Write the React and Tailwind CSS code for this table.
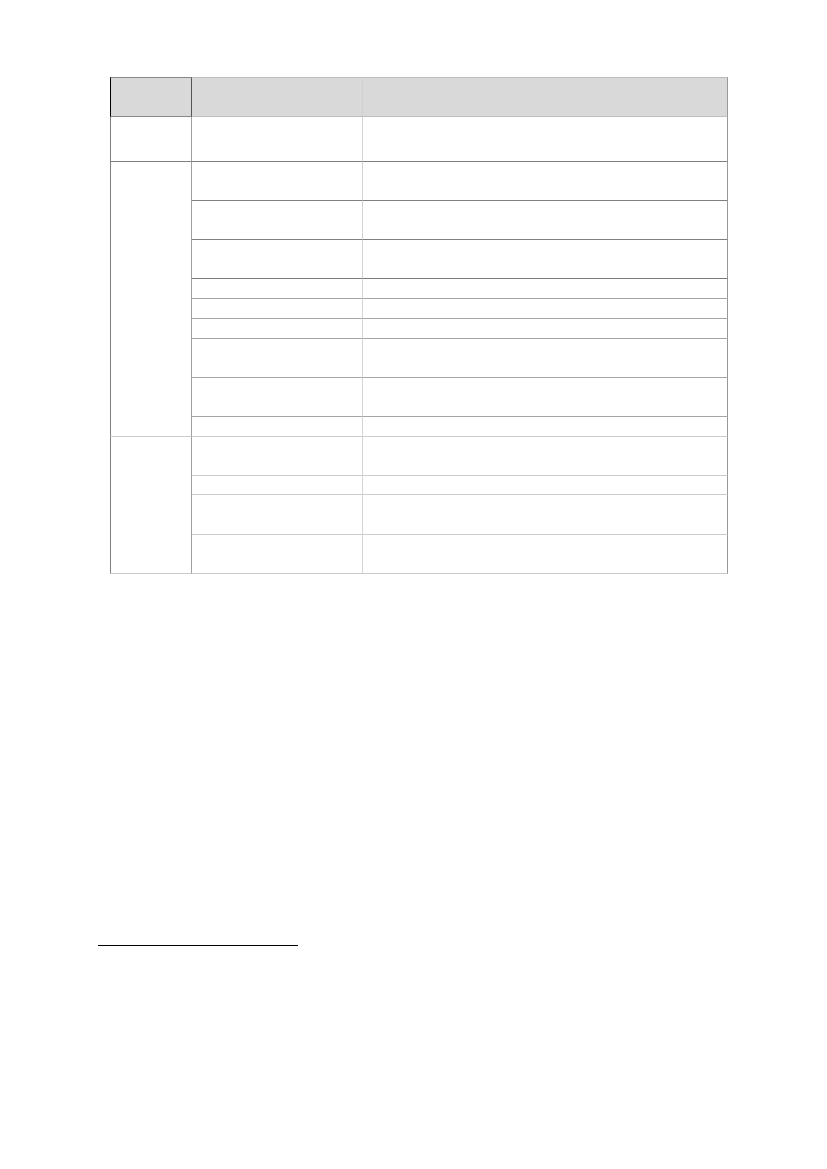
import React from "react";

// body rows of the right two columns: height and bottom rule colour
const groups = [
  {
    span: "row-span-1",
    bottom: "border-b-[#7f7f7f]",
    rows: [{ h: "h-[45px]", b: "border-b-[#7f7f7f]" }],
  },
  {
    span: "row-span-9",
    bottom: "border-b-[#cccccc]",
    rows: [
      { h: "h-[39px]", b: "border-b-[#808080]" },
      { h: "h-[39px]", b: "border-b-[#808080]" },
      { h: "h-[39px]", b: "border-b-[#7a7a7a]" },
      { h: "h-[20px]", b: "border-b-[#a6a6a6]" },
      { h: "h-[20px]", b: "border-b-[#a6a6a6]" },
      { h: "h-[20px]", b: "border-b-[#a6a6a6]" },
      { h: "h-[39px]", b: "border-b-[#a6a6a6]" },
      { h: "h-[39px]", b: "border-b-[#a6a6a6]" },
      { h: "h-[20px]", b: "border-b-[#cccccc]" },
    ],
  },
  {
    span: "row-span-4",
    bottom: "border-b-[#cccccc]",
    rows: [
      { h: "h-[39px]", b: "border-b-[#cccccc]" },
      { h: "h-[19px]", b: "border-b-[#cccccc]" },
      { h: "h-[40px]", b: "border-b-[#cccccc]" },
      { h: "h-[39px]", b: "border-b-[#cccccc]" },
    ],
  },
];

const App = () => {
  return (
    <main className="bg-white min-h-[1169px] pt-[77px]">
      {/* table */}
      <div className="ml-[110px] w-[618px] grid grid-cols-[82px_171px_365px]">
        {/* header */}
        <div className="h-[40px] bg-[#d9d9d9] border-l border-t border-r border-b border-l-black border-t-[#888888] border-r-[#555555] border-b-[#888888]"></div>
        <div className="h-[40px] bg-[#d9d9d9] border-t border-r border-b border-t-[#bdbdbd] border-r-[#d0d0d0] border-b-[#bdbdbd]"></div>
        <div className="h-[40px] bg-[#d9d9d9] border-t border-r border-b border-t-[#bdbdbd] border-r-[#999999] border-b-[#bdbdbd]"></div>

        {groups.map((g, gi) => (
          <React.Fragment key={gi}>
            <div
              className={`col-start-1 ${g.span} border-l border-r border-b border-l-[#808080] border-r-[#a0a0a0] ${g.bottom}`}
            ></div>
            {g.rows.map((r, ri) => (
              <React.Fragment key={ri}>
                <div
                  className={`col-start-2 ${r.h} border-r border-b border-r-[#d4d4d4] ${r.b}`}
                ></div>
                <div
                  className={`col-start-3 ${r.h} border-r border-b border-r-[#999999] ${r.b}`}
                ></div>
              </React.Fragment>
            ))}
          </React.Fragment>
        ))}
      </div>

      {/* footnote rule */}
      <div className="ml-[98px] mt-[371px] w-[200px] h-px bg-black"></div>
    </main>
  );
};

export default App;
